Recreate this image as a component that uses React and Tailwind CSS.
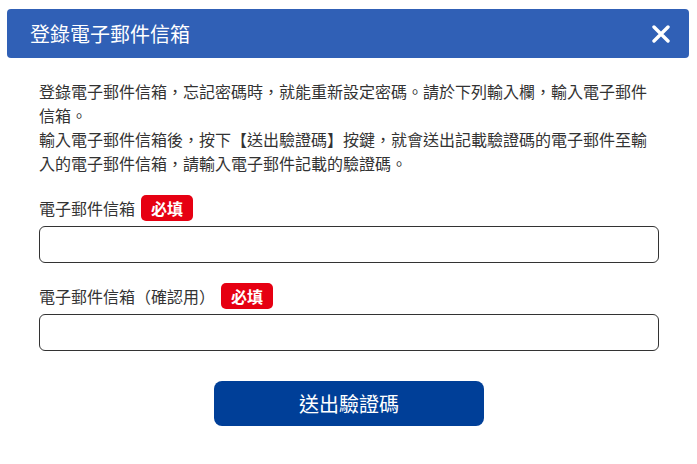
import React from "react";

const font = { fontFamily: '"Noto Sans CJK TC", "Noto Sans", sans-serif' };

function Badge() {
  return (
    <span className="inline-flex h-[26px] items-center rounded-[5px] bg-[#e60012] px-[10px] text-[16px] font-bold leading-none text-white">
      必填
    </span>
  );
}

export default function App() {
  return (
    <div lang="zh-TW" className="h-[464px] w-full bg-white pt-[9px]" style={font}>
      <div className="mx-[7px] mr-[8px] flex h-[49px] items-center justify-between rounded-[4px] bg-[#3060b6] pl-[23px] pr-[19px]">
        <span className="text-[20px] leading-none text-white">登錄電子郵件信箱</span>
        <svg width="18" height="18" viewBox="0 0 18 18" aria-hidden="true">
          <path d="M2 2L16 16M16 2L2 16" stroke="white" strokeWidth="3.4" strokeLinecap="round" />
        </svg>
      </div>

      <div className="pl-[39px] pr-[38px] pt-[21px]">
        <p className="text-[16px] leading-[24px] text-[#333]">
          登錄電子郵件信箱，忘記密碼時，就能重新設定密碼。請於下列輸入欄，輸入電子郵件信箱。
          <br />
          輸入電子郵件信箱後，按下【送出驗證碼】按鍵，就會送出記載驗證碼的電子郵件至輸入的電子郵件信箱，請輸入電子郵件記載的驗證碼。
        </p>

        <div className="mt-[20px] flex h-[26px] items-center gap-[6px]">
          <span className="text-[16px] leading-none text-[#333]">電子郵件信箱</span>
          <Badge />
        </div>
        <input
          type="email"
          className="mt-[5px] block h-[37px] w-full rounded-[6px] border border-[#333] bg-white px-3 outline-none"
        />

        <div className="mt-[20px] flex h-[26px] items-center gap-[6px]">
          <span className="text-[16px] leading-none text-[#333]">電子郵件信箱（確認用）</span>
          <Badge />
        </div>
        <input
          type="email"
          className="mt-[5px] block h-[37px] w-full rounded-[6px] border border-[#333] bg-white px-3 outline-none"
        />
      </div>

      <div className="mt-[30px] flex justify-center pl-[1px]">
        <button className="flex h-[45px] w-[270px] items-center justify-center rounded-[8px] bg-[#003f98] text-[20px] leading-none text-white">
          送出驗證碼
        </button>
      </div>
    </div>
  );
}
